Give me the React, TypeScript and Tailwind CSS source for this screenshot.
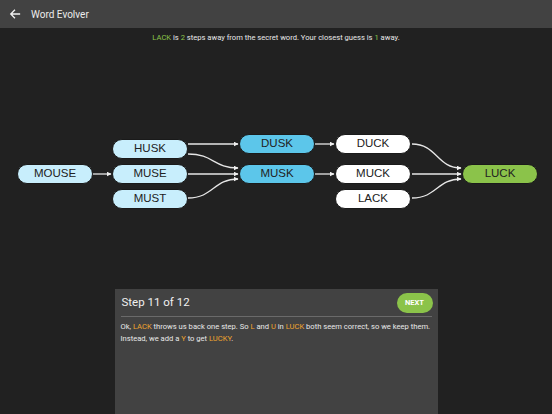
import React from "react";

type N = { label: string; x: number; y: number; kind: "light" | "blue" | "white" | "green" };

const nodes: N[] = [
  { label: "MOUSE", x: 17, y: 116, kind: "light" },
  { label: "HUSK", x: 112, y: 91, kind: "light" },
  { label: "MUSE", x: 112, y: 116, kind: "light" },
  { label: "MUST", x: 112, y: 141, kind: "light" },
  { label: "DUSK", x: 239, y: 86, kind: "blue" },
  { label: "MUSK", x: 239, y: 116, kind: "blue" },
  { label: "DUCK", x: 335, y: 86, kind: "white" },
  { label: "MUCK", x: 335, y: 116, kind: "white" },
  { label: "LACK", x: 335, y: 141, kind: "white" },
  { label: "LUCK", x: 462, y: 116, kind: "green" },
];

const kindClass: Record<N["kind"], string> = {
  light: "bg-[#c8eefc]",
  blue: "bg-[#5cc6ea]",
  white: "bg-white",
  green: "bg-[#8bc34a]",
};

function edge(x1: number, y1: number, x2: number, y2: number) {
  if (y1 === y2) return `M${x1} ${y1} L${x2 - 1} ${y2}`;
  const dx = (x2 - x1) / 2;
  return `M${x1} ${y1} C${x1 + dx} ${y1}, ${x2 - dx} ${y2}, ${x2 - 1} ${y2}`;
}

const edges: [number, number, number, number][] = [
  [92, 126, 112, 126],
  [188, 96, 239, 96],
  [188, 106, 239, 120],
  [188, 126, 239, 126],
  [188, 150, 239, 131],
  [315, 96, 335, 96],
  [315, 126, 335, 126],
  [412, 96, 462, 120],
  [412, 126, 462, 126],
  [412, 150, 462, 131],
];

const G = ({ children }: { children: React.ReactNode }) => (
  <span className="text-[#8bc34a]">{children}</span>
);
const O = ({ children }: { children: React.ReactNode }) => (
  <span className="text-[#f0a52e]">{children}</span>
);

export default function App() {
  return (
    <div
      className="w-[552px] h-[414px] bg-[#212121] flex flex-col overflow-hidden"
      style={{ fontFamily: "Roboto, 'Liberation Sans', sans-serif" }}
    >
      <div className="h-[28px] bg-[#424242] flex items-center shrink-0">
        <svg className="ml-[9px]" width="12" height="12" viewBox="0 0 24 24" fill="none" stroke="#f2f2f2" strokeWidth="2.6" strokeLinecap="square">
          <path d="M21 12H4M11 4.5 3.5 12l7.5 7.5" />
        </svg>
        <span className="ml-[10px] text-[10px] text-[#ececec]">Word Evolver</span>
      </div>
      <div className="h-[20px] shrink-0 flex items-center justify-center text-[7.6px] text-[#e8e8e8]">
        <span>
          <G>LACK</G> is <G>2</G> steps away from the secret word. Your closest guess is <G>1</G> away.
        </span>
      </div>
      <div className="relative h-[241px] shrink-0">
        <svg className="absolute inset-0" width="552" height="241">
          <defs>
            <marker id="ah" markerWidth="5" markerHeight="5" refX="4.5" refY="2.5" orient="auto" markerUnits="userSpaceOnUse">
              <path d="M0 0 L5 2.5 L0 5 Z" fill="#f0f0f0" />
            </marker>
          </defs>
          {edges.map((e, i) => (
            <path key={i} d={edge(...e)} fill="none" stroke="#e6e6e6" strokeWidth="1.3" markerEnd="url(#ah)" />
          ))}
        </svg>
        {nodes.map((n) => (
          <div
            key={n.label}
            className={`absolute w-[76px] h-[20px] rounded-full border border-[#1a1a1a] flex items-center justify-center text-[11.5px] text-[#222] ${kindClass[n.kind]}`}
            style={{ left: n.x, top: n.y, fontFamily: "'Liberation Sans', Arial, sans-serif" }}
          >
            {n.label}
          </div>
        ))}
      </div>
      <div className="w-[323px] h-[125px] mx-auto bg-[#424242] px-[6px] shrink-0">
        <div className="h-[28px] flex items-center justify-between border-b border-[#6a6a6a]">
          <span className="text-[11.5px] text-[#f0f0f0] ml-[1px]">Step 11 of 12</span>
          <button className="w-[36px] h-[20px] mt-[1px] rounded-full bg-[#8bc34a] text-white text-[7.5px] font-bold mr-[-1px]">
            NEXT
          </button>
        </div>
        <div className="pt-[4px] text-[7.6px] leading-[12px] text-[#e8e8e8]">
          Ok, <O>LACK</O> throws us back one step. So <O>L</O> and <O>U</O> in <O>LUCK</O> both seem correct, so we keep them.
          <br />
          Instead, we add a <O>Y</O> to get <O>LUCKY</O>.
        </div>
      </div>
    </div>
  );
}
